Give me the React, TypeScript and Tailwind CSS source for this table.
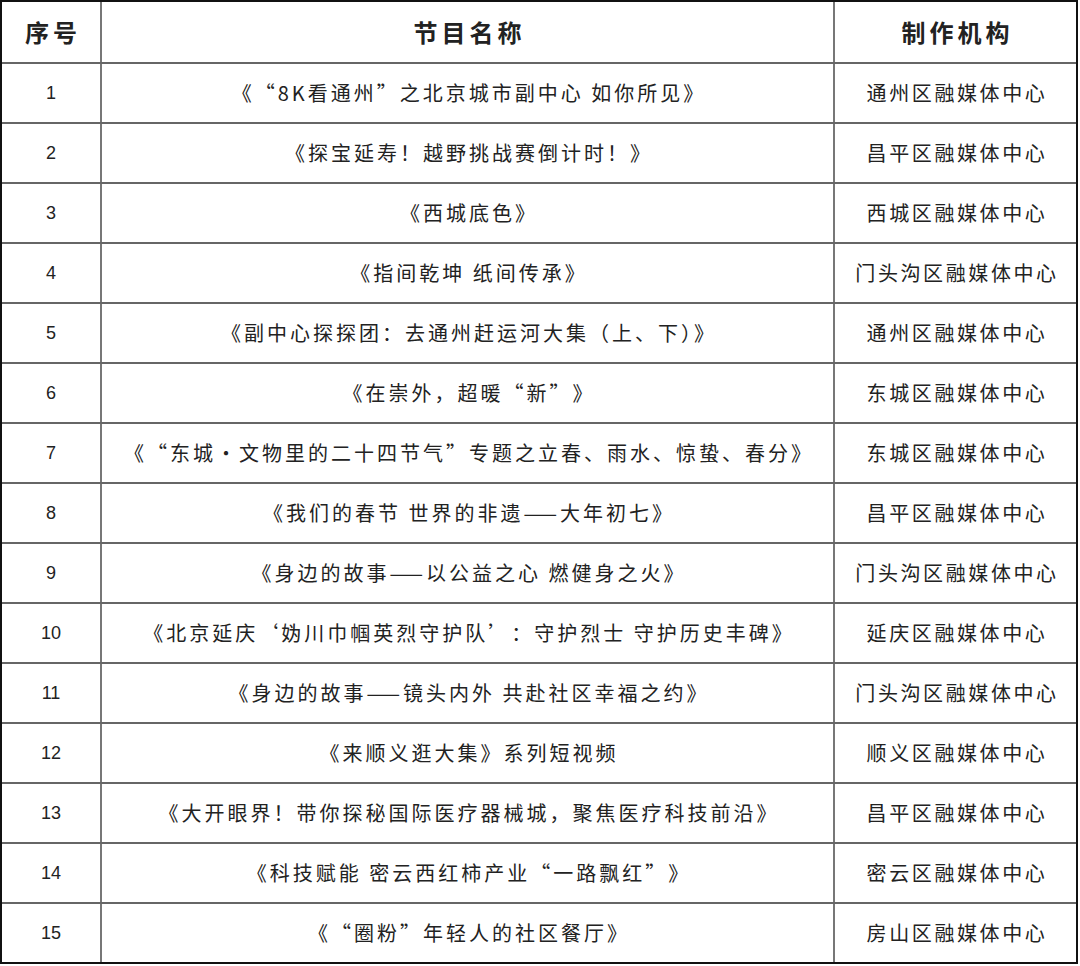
const rows: [string, string][] = [
  ['《“8K看通州”之北京城市副中心 如你所见》', '通州区融媒体中心'],
  ['《探宝延寿！越野挑战赛倒计时！》', '昌平区融媒体中心'],
  ['《西城底色》', '西城区融媒体中心'],
  ['《指间乾坤 纸间传承》', '门头沟区融媒体中心'],
  ['《副中心探探团：去通州赶运河大集（上、下）》', '通州区融媒体中心'],
  ['《在崇外，超暖“新”》', '东城区融媒体中心'],
  ['《“东城·文物里的二十四节气”专题之立春、雨水、惊蛰、春分》', '东城区融媒体中心'],
  ['《我们的春节 世界的非遗——大年初七》', '昌平区融媒体中心'],
  ['《身边的故事——以公益之心 燃健身之火》', '门头沟区融媒体中心'],
  ['《北京延庆‘妫川巾帼英烈守护队’：守护烈士 守护历史丰碑》', '延庆区融媒体中心'],
  ['《身边的故事——镜头内外 共赴社区幸福之约》', '门头沟区融媒体中心'],
  ['《来顺义逛大集》系列短视频', '顺义区融媒体中心'],
  ['《大开眼界！带你探秘国际医疗器械城，聚焦医疗科技前沿》', '昌平区融媒体中心'],
  ['《科技赋能 密云西红柿产业“一路飘红”》', '密云区融媒体中心'],
  ['《“圈粉”年轻人的社区餐厅》', '房山区融媒体中心'],
]

const cjk = "font-['Noto_Sans_CJK_SC',sans-serif]"

// curly quotes and the middle dot are full width in the original
function Title({ text }: { text: string }) {
  const parts = text.split(/([“”‘’·])/)
  return (
    <>
      {parts.map((p, i) =>
        /^[“”‘’·]$/.test(p) ? (
          <span key={i} className="[font-feature-settings:'fwid']">{p}</span>
        ) : (
          <span key={i}>{p}</span>
        )
      )}
    </>
  )
}

export default function App() {
  return (
    <div className="w-[1080px] h-[966px] bg-white">
      <div className={`w-[1078px] border-2 border-[#111] text-[#222] ${cjk}`}>
        {/* header */}
        <div className="grid grid-cols-[98px_733px_243px] h-[60px] font-bold text-[24px] tracking-[4px]">
          <div className="flex items-center justify-center pl-[4px]">序号</div>
          <div className="flex items-center justify-center border-l-2 border-[#777] pl-[4px]">节目名称</div>
          <div className="flex items-center justify-center border-l-2 border-[#777] pl-[4px]">制作机构</div>
        </div>
        {rows.map(([title, org], i) => (
          <div
            key={i}
            className="grid grid-cols-[98px_733px_243px] h-[60px] border-t-2 border-[#666] text-[20px]"
          >
            <div className="flex items-center justify-center font-['Liberation_Sans',sans-serif] text-[18px]">
              {i + 1}
            </div>
            <div className="flex items-center justify-center border-l-2 border-[#777] tracking-[3px] pl-[3px] whitespace-nowrap">
              <Title text={title} />
            </div>
            <div className="flex items-center justify-center border-l-2 border-[#777] tracking-[2.6px] pl-[3px] whitespace-nowrap">
              {org}
            </div>
          </div>
        ))}
      </div>
    </div>
  )
}
